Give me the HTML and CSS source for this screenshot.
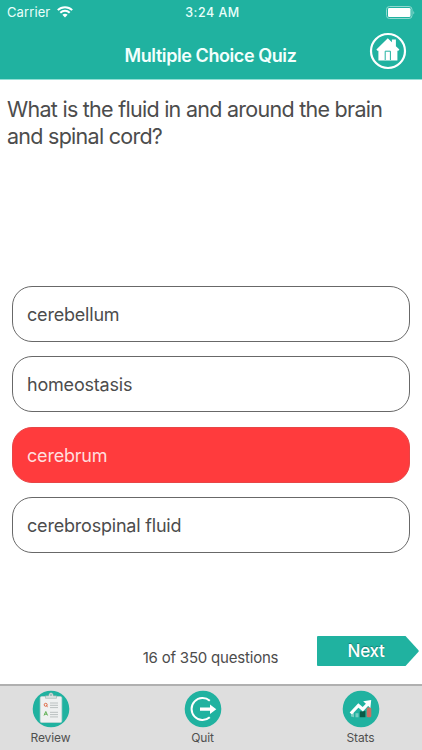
FILE: index.html
```html
<!DOCTYPE html>
<html lang="en">
<head>
<meta charset="utf-8">
<title>Multiple Choice Quiz</title>
<link rel="stylesheet" href="styles.css">
</head>
<body>
<div class="app">
  <header class="header">
    <div class="status">
      <div class="carrier"><span>Carrier</span>
        <svg class="wifi" width="16" height="12" viewBox="0 0 16 12" fill="none" stroke="#fff" stroke-width="2"><path d="M.8 4.1C4.8.2 11.2.2 15.2 4.1"/><path d="M3.3 6.8C6 4.2 10 4.2 12.7 6.8"/><path d="M5.4 8.8C6.8 7.3 9.2 7.3 10.6 8.8L8 11.5Z" fill="#fff" stroke="none"/></svg>
      </div>
      <time class="clock">3:24 AM</time>
      <svg class="battery" width="30" height="13" viewBox="0 0 30 13"><rect x=".5" y=".5" width="25.5" height="12" rx="3" fill="none" stroke="#8fd8cf"/><rect x="2" y="2" width="22.5" height="9" rx="1.3" fill="#fff"/><path d="M27.3 4.5q1.7 2 0 4z" fill="#8fd8cf"/></svg>
    </div>
    <div class="titlebar">
      <h1>Multiple Choice Quiz</h1>
      <svg class="home" width="38" height="38" viewBox="0 0 38 38"><circle cx="19" cy="19" r="17" fill="none" stroke="#fff" stroke-width="2.2"/><path d="M7.4 17.5 18.8 6.3l4.1 4V7.5h4v6.8l3.5 3.3-1 1.1h-1v9.7H9.4v-9.7h-1z" fill="#fff"/><path d="M16.2 28V19.2h5.2V28" fill="#fff" stroke="#20b2a0" stroke-width="1"/></svg>
    </div>
  </header>
  <main class="quiz">
    <h2>What is the fluid in and around the brain<br>and spinal cord?</h2>
    <div class="answers">
      <button class="answer">cerebellum</button>
      <button class="answer">homeostasis</button>
      <button class="answer wrong">cerebrum</button>
      <button class="answer">cerebrospinal fluid</button>
    </div>
    <div class="progress">
      <span class="count">16 of 350 questions</span>
      <button class="next"><svg width="102" height="30" viewBox="0 0 102 30"><path d="M0 1Q0 0 1 0H88.5L101.5 14.2Q102 15 101.5 15.8L88.5 30H1Q0 30 0 29Z" fill="#20b2a0"/></svg><span>Next</span></button>
    </div>
  </main>
  <nav class="tabs">
    <a class="tab"><svg width="38" height="38" viewBox="0 0 38 38"><circle cx="19" cy="19" r="18.3" fill="#20b2a0"/><rect x="8.2" y="6.5" width="21.6" height="26" rx="1.5" fill="#eff1f1" stroke="#c3d5d2" stroke-width=".7"/><path d="M13.5 8.3V5.8h3.1q.3-3 2.4-3t2.4 3h3.1v2.5z" fill="#dce3e2" stroke="#8fa7a3" stroke-width=".5"/><circle cx="19" cy="5" r=".8" fill="#619b92"/><path d="M18 13h8M18 15.3h8M18 17.6h8M18 22.3h8M18 24.6h8M18 26.9h8" stroke="#bac0c0" stroke-width="1"/><circle cx="13.7" cy="14.8" r="1.5" fill="none" stroke="#df6c47" stroke-width="1"/><path d="m14.2 15.5 1.5 1.4" stroke="#df6c47"/><path d="m12 25.5 1.8-4 1.8 4m-3-1.3h2.4" fill="none" stroke="#55aa47" stroke-width=".9"/></svg><span>Review</span></a>
    <a class="tab"><svg width="38" height="38" viewBox="0 0 38 38"><circle cx="19" cy="19" r="18.3" fill="#20b2a0"/><path d="M25.8 10.7A11 11 0 1 0 25.8 27.3" fill="none" stroke="#fff" stroke-width="2"/><path d="M16 17.6h10v-3.2l6.3 4.8-6.3 4.8v-3.2H16z" fill="#fff"/></svg><span>Quit</span></a>
    <a class="tab"><svg width="38" height="38" viewBox="0 0 38 38"><circle cx="19" cy="19" r="18.3" fill="#20b2a0"/><path d="M17.8 21.6 23.4 21v6.2h-5.6z" fill="#095b47"/><rect x="24.7" y="17.5" width="4.6" height="9.7" rx="1.2" fill="#cd6d62"/><path d="M9 26.5v-1.8l3-3v5.5zM13.5 27.2v-4h3v4z" fill="#77cec3"/><path d="m8.8 23.5 7.6-8 4.4 3.7 6-6.2" fill="none" stroke="#fff" stroke-width="3.2"/><path d="m21.2 11.2 8-1.1-.8 8z" fill="#fff"/></svg><span>Stats</span></a>
  </nav>
</div>
</body>
</html>
```

FILE: styles.css
```css
* { box-sizing: border-box; }
body { margin: 0; background: #fff; color: #4c4c4c; font-family: Inter, "Liberation Sans", sans-serif; }
.app { width: 422px; height: 750px; display: flex; flex-direction: column; overflow: hidden; }
h1, h2 { margin: 0; }
svg { display: block; }
button { border: 0; background: none; font: inherit; color: inherit; padding: 0; }
.header { height: 80px; flex: none; background: #20b2a0; color: #fff; border-bottom: 1px solid #93dfd5; }
.status { height: 24px; display: grid; grid-template-columns: 1fr auto 1fr; align-items: center; padding: 0 6px 0 7px; font-size: 13px; color: #e9fffb; }
.carrier { display: flex; align-items: center; gap: 7px; letter-spacing: .1px; }
.clock { font-weight: 500; font-size: 12.5px; letter-spacing: .5px; padding-left: 2px; }
.battery { justify-self: end; }
.titlebar { height: 55px; display: grid; grid-template-columns: 1fr auto 1fr; align-items: center; padding: 0 15px 0 14px; }
h1 { grid-column: 2; font-size: 18px; line-height: 24px; font-weight: 600; letter-spacing: -.42px; padding-top: 9px; color: #f3fffd; }
.home { justify-self: end; margin-bottom: 1px; }
.quiz { flex: 1; display: flex; flex-direction: column; }
h2 { height: 206px; padding: 16px 7px 0; font-size: 21.5px; line-height: 27px; font-weight: 400; letter-spacing: -.73px; white-space: nowrap; }
.answers { display: flex; flex-direction: column; gap: 14.3px; padding: 0 12px 0 12px; }
.answer { height: 56px; border: 1px solid #686868; border-radius: 20px; padding: 1px 14px 0; text-align: left; font-size: 18px; letter-spacing: -.2px; }
.wrong { background: #ff3b3d; border-color: #e74646; color: #ffdede; }
.progress { display: grid; grid-template-columns: 1fr auto 1fr; align-items: end; margin-top: 83px; padding: 0 3px 0 2px; }
.count { grid-column: 2; font-size: 15px; line-height: 20px; letter-spacing: -.2px; }
.next { justify-self: end; display: grid; height: 30px; margin-bottom: 2px; color: #fff; font-size: 17px; font-weight: 500; line-height: 30px; letter-spacing: -.3px; text-shadow: 0 -1px 1px #167c70; }
.next > * { grid-area: 1 / 1; }
.next span { padding-right: 4px; }
.tabs { height: 66px; flex: none; display: grid; grid-template-columns: 152px 158px 54px; padding: 4px 24px 0; background: #dedede; border-top: 2px solid #b0b0b0; }
.tab { width: 54px; display: flex; flex-direction: column; align-items: center; font-size: 12px; line-height: 16px; gap: 2px; color: #505050; }
.tab span { margin-right: 1px; letter-spacing: -.1px; }
```
